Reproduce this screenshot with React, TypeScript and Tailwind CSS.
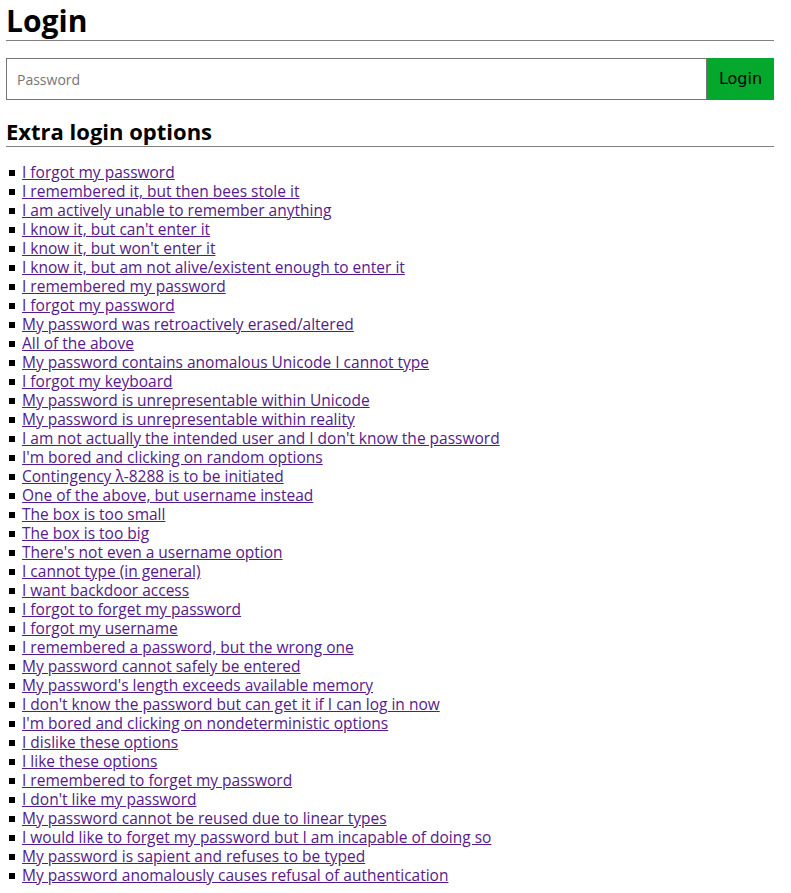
import { useState } from "react";

const options = [
    "I forgot my password",
    "I remembered it, but then bees stole it",
    "I am actively unable to remember anything",
    "I know it, but can't enter it",
    "I know it, but won't enter it",
    "I know it, but am not alive/existent enough to enter it",
    "I remembered my password",
    "I forgot my password",
    "My password was retroactively erased/altered",
    "All of the above",
    "My password contains anomalous Unicode I cannot type",
    "I forgot my keyboard",
    "My password is unrepresentable within Unicode",
    "My password is unrepresentable within reality",
    "I am not actually the intended user and I don't know the password",
    "I'm bored and clicking on random options",
    "Contingency λ-8288 is to be initiated",
    "One of the above, but username instead",
    "The box is too small",
    "The box is too big",
    "There's not even a username option",
    "I cannot type (in general)",
    "I want backdoor access",
    "I forgot to forget my password",
    "I forgot my username",
    "I remembered a password, but the wrong one",
    "My password cannot safely be entered",
    "My password's length exceeds available memory",
    "I don't know the password but can get it if I can log in now",
    "I'm bored and clicking on nondeterministic options",
    "I dislike these options",
    "I like these options",
    "I remembered to forget my password",
    "I don't like my password",
    "My password cannot be reused due to linear types",
    "I would like to forget my password but I am incapable of doing so",
    "My password is sapient and refuses to be typed",
    "My password anomalously causes refusal of authentication",
]

export default function App() {
    const [password, setPassword] = useState("")

    return (
        <div className="bg-white min-h-screen px-[6px] font-['Open_Sans',sans-serif] text-black">
            <div className="w-[768px]">
                <h1 className="text-[30px] font-bold leading-[40px] pt-[1px] h-[41px] border-b border-[#808080]">
                    Login
                </h1>
                <div className="flex mt-[17px] h-[42px]">
                    <input
                        type="password"
                        value={password}
                        onChange={(e) => setPassword(e.target.value)}
                        placeholder="Password"
                        className="flex-1 border border-[#767676] px-[10px] text-[14px] outline-none placeholder:text-[#757575]"
                    />
                    <button className="w-[67px] bg-[#03a82d] text-[16px] font-['DejaVu_Sans',sans-serif] text-black">
                        Login
                    </button>
                </div>
                <h2 className="mt-[16px] text-[22px] font-bold leading-[30px] border-b border-[#808080]">
                    Extra login options
                </h2>
                <ul className="mt-[16px]">
                    {options.map((option, i) => (
                        <li key={i} className="flex items-center h-[19px] text-[15.5px] leading-[19px]">
                            <span className="ml-[3px] w-[6px] h-[6px] bg-black mr-[7px] shrink-0" />
                            <a href="#" className="block h-[19px] leading-[19px] text-[#551a8b] underline whitespace-nowrap">
                                {option}
                            </a>
                        </li>
                    ))}
                </ul>
            </div>
        </div>
    )
}
